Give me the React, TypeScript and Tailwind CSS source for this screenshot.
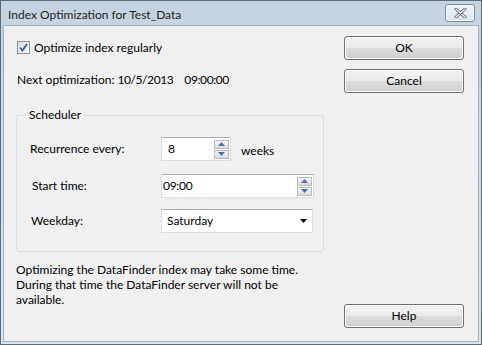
import React from "react";

const font = { fontFamily: 'Lato, "Noto Sans", sans-serif' };

function Button({ label }: { label: string }) {
  return (
    <div className="w-[120px] h-[24px] rounded-[3px] border border-[#707070] bg-[linear-gradient(#f2f2f2_0%,#ebebeb_50%,#dddddd_50%,#cfcfcf_100%)] shadow-[inset_0_0_0_1px_#fcfcfc] flex items-center justify-center text-[12px] text-black">
      {label}
    </div>
  );
}

function SpinBtn({ up }: { up: boolean }) {
  return (
    <div className="w-[15px] h-[9px] border border-[#b7babf] bg-[linear-gradient(#f6f6f6,#dcdcdc)] flex items-center justify-center">
      <svg width="7" height="4" viewBox="0 0 7 4">
        {up ? <polygon points="0,4 7,4 3.5,0" fill="#4e6fa8" /> : <polygon points="0,0 7,0 3.5,4" fill="#4e6fa8" />}
      </svg>
    </div>
  );
}

function Spinner() {
  return (
    <div className="flex flex-col gap-[1px]">
      <SpinBtn up />
      <SpinBtn up={false} />
    </div>
  );
}

export default function App() {
  return (
    <div style={font} className="w-[482px] h-[345px] border border-[#5d6a77] bg-[linear-gradient(#c5d3e0,#d9e4ed)] flex flex-col px-[2px] pb-[2px] text-[12px] text-black">
      {/* title bar */}
      <div className="h-[24px] flex items-start justify-between">
        <div className="pl-[5px] pt-[6px] text-[12px] leading-[16px] text-[#1e1e1e]">Index Optimization for Test_Data</div>
        <div className="mt-[3px] mr-[4px] w-[30px] h-[18px] rounded-[3px] border border-[#7c8a98] bg-[linear-gradient(#eef3f7,#d9e2ea)] shadow-[inset_0_0_0_1px_#f7fafc] flex items-center justify-center">
          <svg width="13" height="10" viewBox="0 0 13 10">
            <path d="M2 1 L11 9 M11 1 L2 9" stroke="#5b6570" strokeWidth="3" strokeLinecap="round" />
            <path d="M2 1 L11 9 M11 1 L2 9" stroke="#f4f6f8" strokeWidth="1.2" strokeLinecap="round" />
          </svg>
        </div>
      </div>
      {/* content */}
      <div className="flex-1 border border-[#a3b1bf] bg-[#f0f0f0] flex">
        <div className="w-[328px] pl-[12px] flex flex-col">
          <div className="mt-[14px] h-[15px] flex items-center">
            <div className="ml-[1px] w-[13px] h-[13px] border border-[#8e8f8f] bg-[linear-gradient(135deg,#dcdcdc,#fdfdfd)] flex items-center justify-center">
              <svg width="9" height="9" viewBox="0 0 9 9">
                <path d="M1 4.5 L3.5 7.5 L8 1" stroke="#3d5aa0" strokeWidth="1.8" fill="none" />
              </svg>
            </div>
            <span className="ml-[4px] leading-[15px]">Optimize index regularly</span>
          </div>
          <div className="mt-[17px] ml-[1px] leading-[16px] flex">
            <span>Next optimization: </span>
            <span className="ml-[3px] tracking-[-0.4px]">10/5/2013</span>
            <span className="ml-[11px] tracking-[-0.4px]">09:00:00</span>
          </div>
          {/* group box */}
          <div className="relative mt-[27px] w-[308px] h-[137px] border border-[#d5dfe5] rounded-[3px] pl-[13px] pt-[21px] flex flex-col">
            <span className="absolute left-[9px] top-[-9px] px-[3px] bg-[#f0f0f0] leading-[16px]">Scheduler</span>
            <div className="flex items-center h-[24px]">
              <span className="w-[131px]">Recurrence every:</span>
              <div className="w-[70px] h-[24px] bg-white border border-[#d9dde3] border-t-[#abadb3] flex items-center justify-between pl-[6px] pr-[1px]">
                <span>8</span>
                <Spinner />
              </div>
              <span className="ml-[10px] mt-[3px]">weeks</span>
            </div>
            <div className="flex items-center h-[24px] mt-[13px]">
              <span className="w-[131px] pl-[2px]">Start time:</span>
              <div className="w-[153px] h-[24px] bg-white border border-[#d9dde3] border-t-[#abadb3] flex items-center justify-between pl-[1px] pr-[1px]">
                <span className="tracking-[-0.3px]">09:00</span>
                <Spinner />
              </div>
            </div>
            <div className="flex items-center h-[24px] mt-[11px]">
              <span className="w-[131px] pl-[1px]">Weekday:</span>
              <div className="w-[152px] h-[24px] bg-white border border-[#d9dde3] border-t-[#abadb3] flex items-center justify-between pl-[5px] pr-[5px]">
                <span>Saturday</span>
                <svg width="7" height="4" viewBox="0 0 7 4">
                  <polygon points="0,0 7,0 3.5,4" fill="#000" />
                </svg>
              </div>
            </div>
          </div>
          <div className="mt-[10px] flex flex-col">
            <span className="h-[15px] leading-[15px]">Optimizing the DataFinder index may take some time.</span>
            <span className="h-[15px] leading-[15px]">During that time the DataFinder server will not be</span>
            <span className="h-[15px] leading-[15px]">available.</span>
          </div>
        </div>
        <div className="flex-1 flex flex-col justify-between pt-[10px] pb-[13px] pl-[12px]">
          <div className="flex flex-col gap-[9px]">
            <Button label="OK" />
            <Button label="Cancel" />
          </div>
          <Button label="Help" />
        </div>
      </div>
    </div>
  );
}
